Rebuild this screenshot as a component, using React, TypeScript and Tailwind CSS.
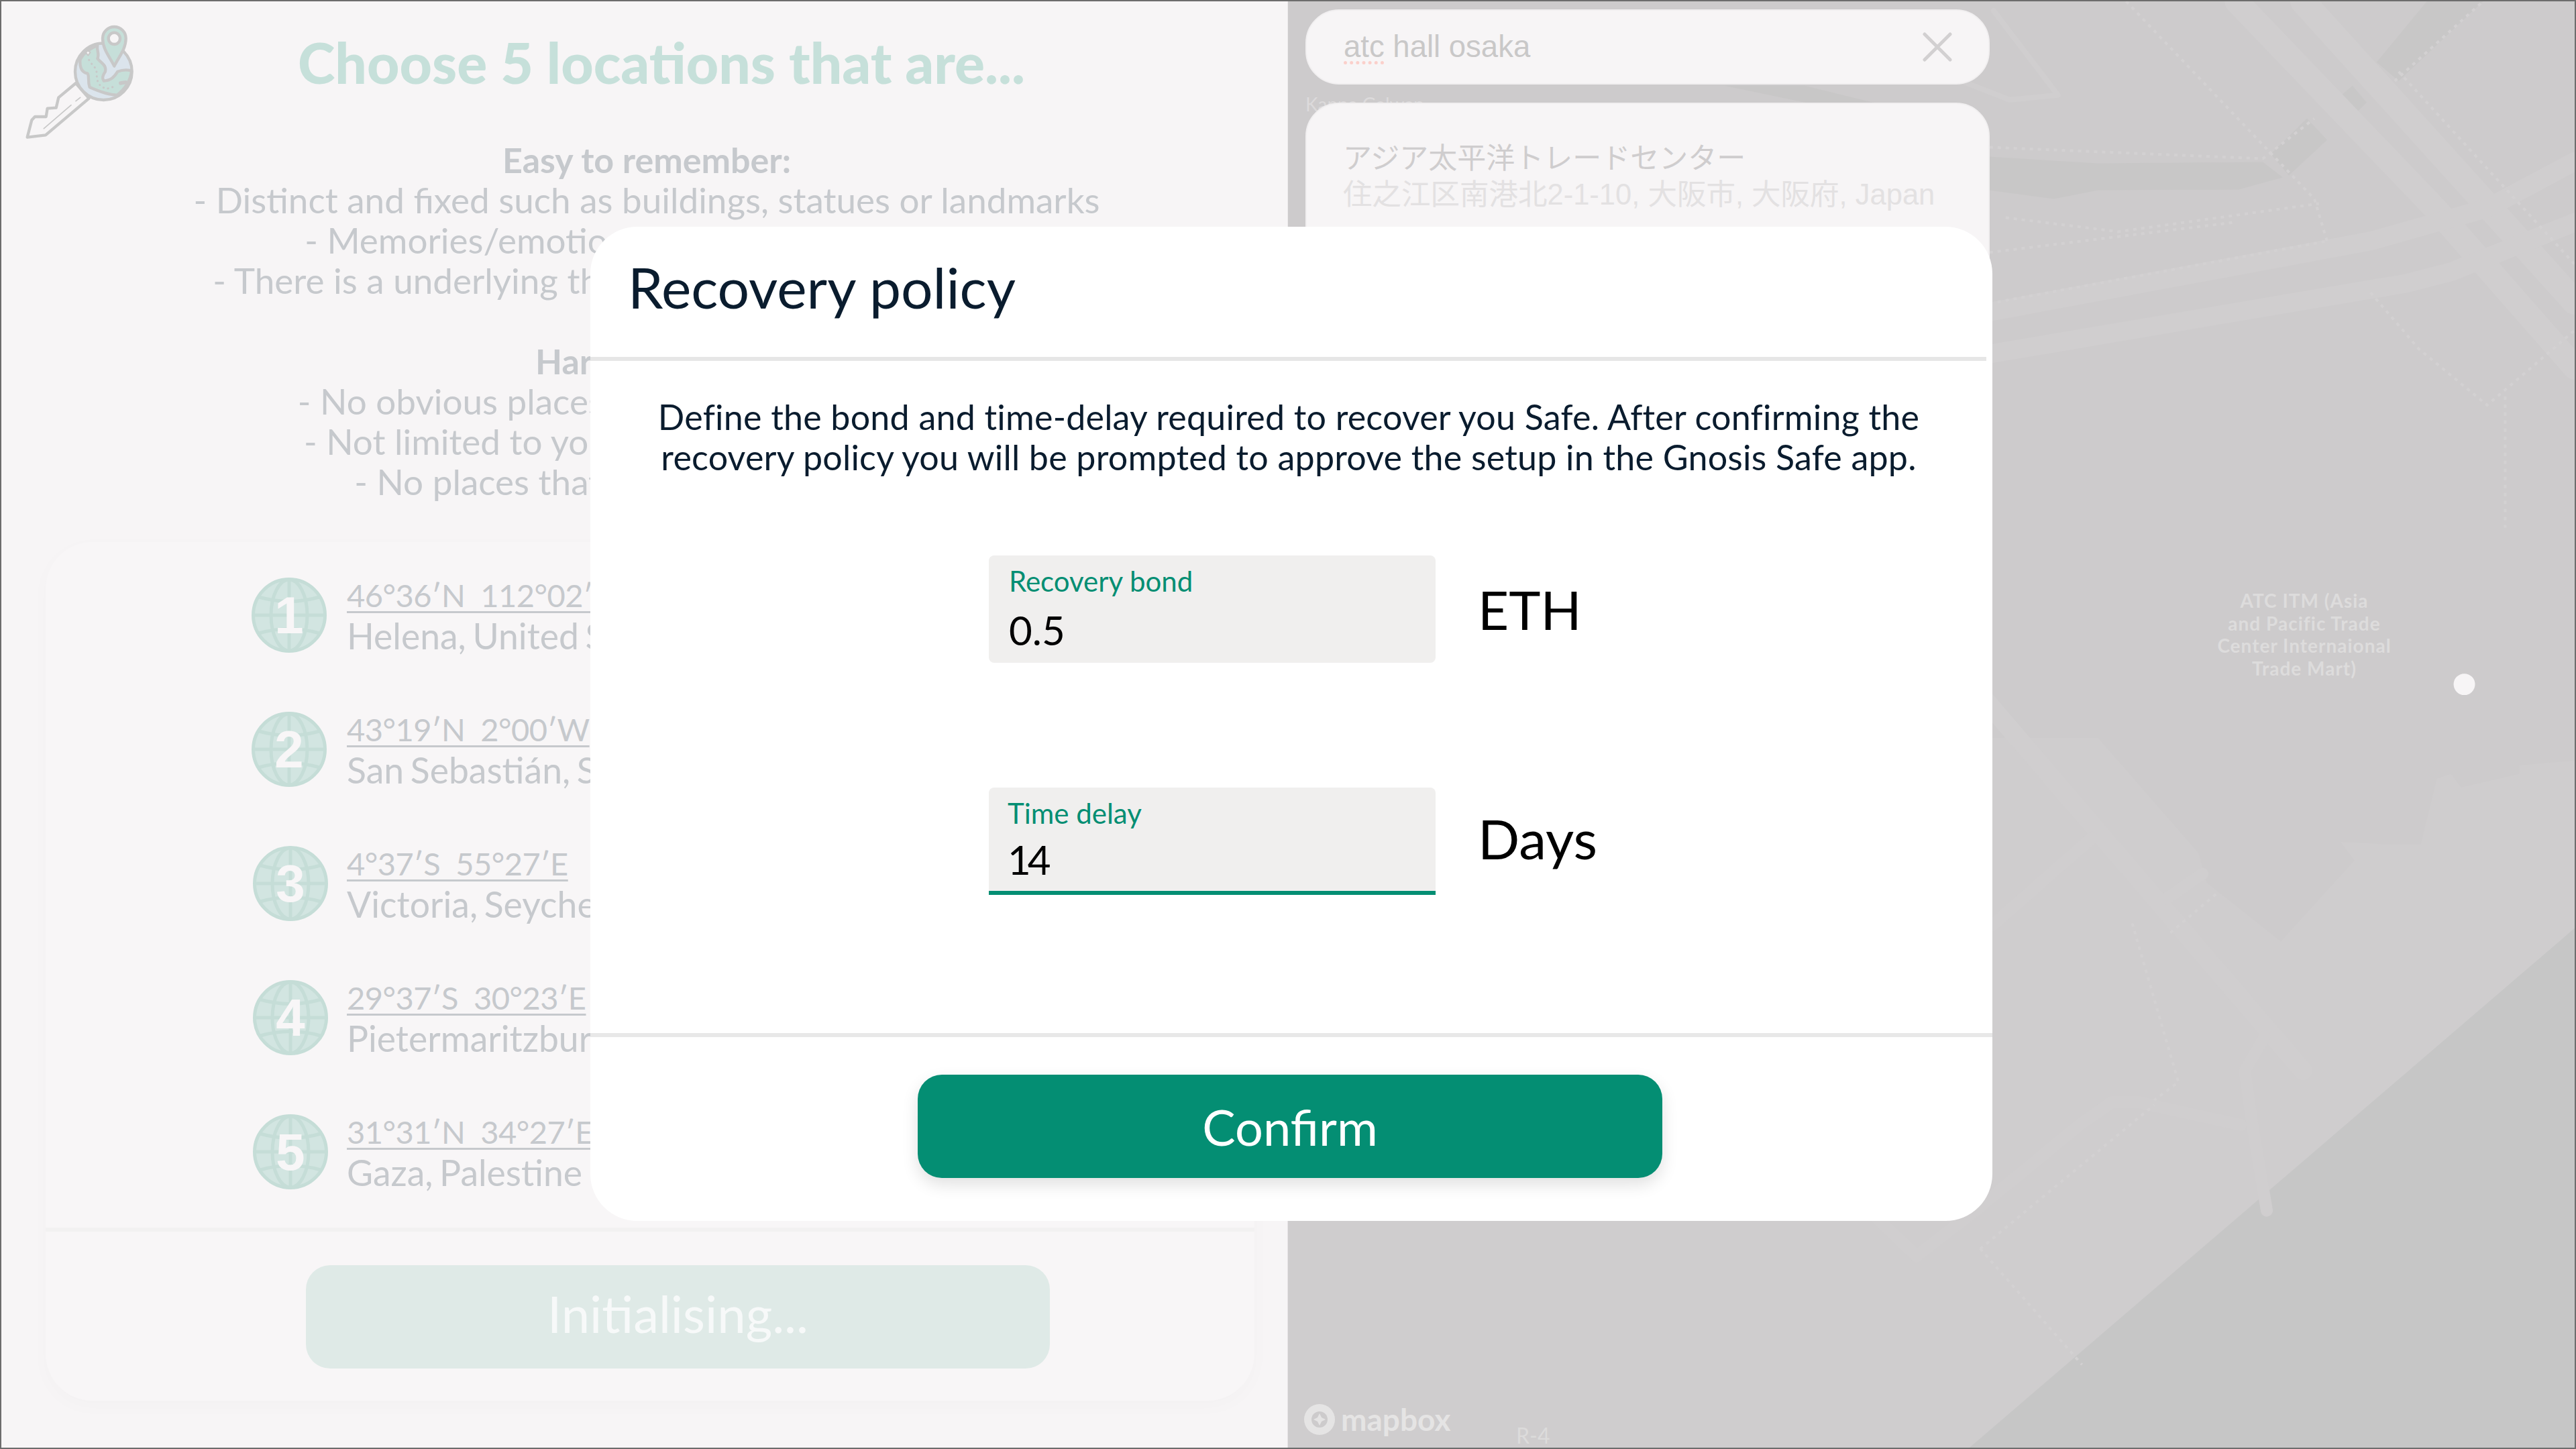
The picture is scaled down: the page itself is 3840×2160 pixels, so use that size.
import React from 'react'

const locations = [
  { n: 1, coord: '46°36′N  112°02′W', place: 'Helena, United States', shift: '' },
  { n: 2, coord: '43°19′N  2°00′W', place: 'San Sebastián, Spain', shift: '' },
  { n: 3, coord: '4°37′S  55°27′E', place: 'Victoria, Seychelles', shift: 'ml-[2px]' },
  { n: 4, coord: '29°37′S  30°23′E', place: 'Pietermaritzburg, South Africa', shift: 'ml-[2px]' },
  { n: 5, coord: '31°31′N  34°27′E', place: 'Gaza, Palestine', shift: 'ml-[2px]' },
]

function KeyLogo() {
  return (
    <svg viewBox="0 0 720 720" className="w-[240px] h-[240px] shrink-0">
      <g stroke="#c8c8c8" strokeWidth="13" strokeLinejoin="round" strokeLinecap="round">
        <path d="M333 372 L256 436 L245 482 L206 485 L200 522 L150 522 L136 537 L116 614 L198 604 L392 440 Z" fill="#f7f5f6" />
        <path d="M190 575 L312 470 M333 452 L353 436" fill="none" strokeWidth="5" />
        <circle cx="457" cy="320" r="127" fill="#dbe4ec" />
        <path d="M352 268 C362 245 385 222 430 203 C425 225 440 240 430 262 C450 285 470 290 465 320 C452 340 450 350 458 362 C490 360 505 345 520 320 C540 312 565 312 582 316 C580 360 550 400 518 425 C480 425 440 410 395 390 C385 360 395 340 385 328 C365 325 350 310 352 268 Z" fill="#c6dfd9" />
        <path d="M505 296 C485 255 453 220 453 172 A52 52 0 0 1 557 172 C557 220 525 255 505 296 Z" fill="#c6dfd9" />
        <circle cx="505" cy="172" r="26" fill="#f7f5f6" />
        <path d="M386 226 L398 234 L388 248 L378 236 Z" fill="#f7f5f6" strokeWidth="6" />
        <path d="M392 268 L405 287 L420 304 L427 325 L427 349 L433 372 L448 388 L470 397 L492 392 L513 381" fill="none" strokeWidth="9" strokeDasharray="1 20" />
        <path d="M533 372 L556 368" fill="none" strokeWidth="16" />
      </g>
    </svg>
  )
}

function GlobeIcon({ n }: { n: number }) {
  return (
    <div className="relative w-[112px] h-[112px] shrink-0">
      <svg viewBox="0 0 112 112" className="w-full h-full">
        <g fill="none" stroke="#c5ddd7" strokeWidth="5">
          <circle cx="56" cy="56" r="53.5" fill="#d2e5e1" />
          <ellipse cx="56" cy="56" rx="27" ry="53" />
          <path d="M56 3 V109 M3 56 H109" />
          <path d="M11 29 Q56 42 101 29 M11 83 Q56 70 101 83" />
        </g>
      </svg>
      <div className="absolute inset-0 flex items-center justify-center [font-family:'Liberation_Sans',sans-serif] font-bold text-[78px] leading-none text-[#f8f6f7]">
        {n}
      </div>
    </div>
  )
}

function LocationRow({ n, coord, place, shift }: { n: number; coord: string; place: string; shift: string }) {
  return (
    <div className="flex items-center h-[200px]">
      <div className={shift}>
        <GlobeIcon n={n} />
      </div>
      <div className={`flex flex-col ${shift ? 'ml-[28px]' : 'ml-[30px]'} text-[#c6c9cd] whitespace-nowrap`}>
        <span className="text-[47px] leading-[60px] tracking-[-0.5px] underline decoration-[3px] underline-offset-[6px] whitespace-pre self-start">{coord}</span>
        <span className="text-[53.5px] leading-[60px] [word-spacing:-4px]">{place}</span>
      </div>
    </div>
  )
}

function MapLayer() {
  return (
    <svg viewBox="1918 0 1920 2160" className="absolute inset-0 w-full h-full">
      <rect x="1918" y="0" width="1922" height="2160" fill="#cdcbcc" />
      <path d="M1918 1100 L3128 1100 L3278 1272 L3290 1316 L3401 1404 L3511 1283 L3490 1255 L3559 1259 L3610 1259 L3634 1161 L3655 1154 L3670 1174 L3757 1154 L3757 1141 L3840 1134 L3840 1384 L2936 2160 L1918 2160 Z" fill="#cfcdce" />
      <path d="M3840 1384 L2936 2160 L3840 2160 Z" fill="#c6c6c6" />
      <g fill="#c8c7c7">
        <path d="M2965 232 L3128 242 L3374 240 L3404 263 L3338 281 L3128 282 L3062 295 L2965 282 Z" />
        <path d="M3386 228 L3440 175 L3470 207 L3413 260 Z" />
        <path d="M3487 144 L3508 126 L3529 151 L3508 172 Z" />
        <path d="M3544 91 L3619 0 L3703 0 L3577 119 Z" />
        <path d="M2570 126 L2690 126 L2800 153 L2700 153 Z" />
      </g>
      <g fill="none" stroke="#d0cecf" strokeLinejoin="round" strokeLinecap="round">
        <path d="M3434 0 L3840 449" strokeWidth="38" />
        <path d="M3335 0 L3631 309 L3840 547" strokeWidth="36" />
        <path d="M2970 463 L3535 358 L3709 309 L3840 239" strokeWidth="28" />
        <path d="M2970 526 L3589 421 L3655 404 L3840 330" strokeWidth="28" />
        <path d="M2900 974 L3434 1597" strokeWidth="28" />
        <path d="M3377 1546 L3347 1597 L3359 1681 L3380 1806" strokeWidth="18" />
        <path d="M3341 1678 L3188 1644 L3149 1644 L3104 1675 L2952 1800 L2857 1874 L2780 1800" strokeWidth="18" />
        <path d="M3230 1340 L3284 1303" strokeWidth="18" />
        <path d="M3119 1249 L2970 1380" strokeWidth="18" />
        <path d="M2972 14 L3068 140 L2996 147 L2924 119" strokeWidth="8" />
      </g>
      <g fill="none" stroke="#d3d1d2" strokeWidth="4" strokeDasharray="5 7">
        <path d="M3170 0 L3451 295 L3470 358" />
        <path d="M2966 218 L3374 235 L3451 175" />
        <path d="M3571 119 L3703 0" />
        <path d="M3577 105 L3840 393" />
        <path d="M2990 323 L3158 344 L3458 302" />
        <path d="M2966 375 L3332 330" />
        <path d="M2978 449 L3470 358" />
        <path d="M3535 435 L3607 519 L3709 603 L3775 547 L3840 491" />
        <path d="M3736 590 L3736 786" />
        <path d="M2952 1863 L3212 1648" />
        <path d="M2952 1863 L3104 2036" />
        <path d="M3179 1377 L3248 1614 L3212 1641" />
        <path d="M3236 1391 L3308 1330" />
      </g>
      <circle cx="3675" cy="1020" r="16" fill="#f7f5f6" />
    </svg>
  )
}

export default function App() {
  return (
    <div className="relative flex w-[3840px] h-[2160px] overflow-hidden border-2 border-[#6d6d6d] bg-[#f7f5f6] [font-family:Lato,sans-serif]">
      {/* Left panel */}
      <div className="flex flex-col w-[1916px] shrink-0">
        <div className="flex h-[206px] items-start">
          <div className="h-[206px] -mt-[2px]">
            <KeyLogo />
          </div>
          <h1 className="flex-1 pr-[188px] pt-[43px] text-center text-[84px] leading-[96px] font-black text-[#c6e0da] whitespace-nowrap">
            Choose 5 locations that are...
          </h1>
        </div>

        <div className="flex flex-col items-center pl-[8px] text-[53px] leading-[60px] text-[#c6c9cd] whitespace-nowrap">
          <p className="font-bold text-[52px]">Easy to remember:</p>
          <p>- Distinct and fixed such as buildings, statues or landmarks</p>
          <p className="pr-[29px]">- Memories/emotional connection to place</p>
          <p className="pl-[20px]">- There is a underlying theme that links them all together</p>
          <p className="h-[60px]"></p>
          <p className="font-bold text-[52px]">Hard to guess:</p>
          <p className="pr-[39px]">- No obvious places like your home or work</p>
          <p className="pl-[54px]">- Not limited to your local area or your country</p>
          <p className="pr-[44px]">- No places that you shared publicly</p>
        </div>

        <div className="flex flex-col ml-[66px] mt-[60px] w-[1802px] h-[1280px] rounded-[70px] bg-[#f8f6f7] shadow-[0_8px_30px_rgba(0,0,0,0.02)]">
          <div className="flex flex-col pt-[9px] pl-[307px] h-[1022px]">
            {locations.map((l) => (
              <LocationRow key={l.n} {...l} />
            ))}
          </div>
          <div className="h-[6px] bg-[#f2f1f1]"></div>
          <div className="flex-1 pt-[50px] pl-[388px]">
            <div className="flex items-center justify-center w-[1109px] h-[154px] pb-[10px] rounded-[36px] bg-[#dfeae7] text-[76px] text-[#f7f9f9]">
              Initialising...
            </div>
          </div>
        </div>
      </div>

      {/* Map */}
      <div className="relative flex-1">
        <MapLayer />
        <div className="absolute top-[877px] left-[1367px] w-[300px] text-center text-[28px] leading-[33.5px] font-bold tracking-[1px] text-[#dddcdc] whitespace-nowrap">
          ATC ITM (Asia<br />and Pacific Trade<br />Center Internaional<br />Trade Mart)
        </div>
        <div className="absolute left-[28px] top-[138px] text-[28px] leading-[30px] text-[#dcdadb] whitespace-nowrap">Kanna Galwan</div>

        <div className="absolute left-[28px] top-[12px] flex flex-col gap-[27px] w-[1020px]">
          <div className="flex items-center justify-between h-[112px] pl-[55px] pr-[54px] rounded-[50px] border-2 border-[#f1eff0] bg-[#f7f5f6] [font-family:'Liberation_Sans',sans-serif] text-[45.5px] text-[#c9c8c8]">
            <span>
              <span className="underline decoration-dotted decoration-[5px] decoration-[#fbd0cb] underline-offset-[6px]">atc</span> hall osaka
            </span>
            <svg viewBox="0 0 44 44" className="w-[44px] h-[44px]">
              <path d="M3 3 L41 41 M41 3 L3 41" stroke="#d2d0d1" strokeWidth="5" strokeLinecap="round" />
            </svg>
          </div>
          <div className="flex flex-col h-[400px] pt-[54px] pl-[54px] rounded-[50px] border-2 border-[#f1eff0] bg-[#f7f5f6] [font-family:'Liberation_Sans','Noto_Sans_CJK_JP',sans-serif] leading-[54px]">
            <span className="text-[43px] text-[#cfcdce]">アジア太平洋トレードセンター</span>
            <span className="text-[43.5px] text-[#e3e1e2]">住之江区南港北2-1-10, 大阪市, 大阪府, Japan</span>
          </div>
        </div>

        <div className="absolute left-[25px] bottom-[18px] flex items-center gap-[8px] text-[#e5e4e4]">
          <svg viewBox="0 0 48 48" className="w-[48px] h-[48px]">
            <circle cx="24" cy="24" r="23" fill="#e5e4e4" />
            <circle cx="24" cy="24" r="12" fill="#cdcbcc" />
            <path d="M24 15 L27 21 L33 24 L27 27 L24 33 L21 27 L15 24 L21 21 Z" fill="#e5e4e4" />
          </svg>
          <span className="text-[46px] leading-none font-bold">mapbox</span>
        </div>
        <div className="absolute left-[342px] bottom-0 text-[32px] leading-[36px] text-[#dcdbdb]">R-4</div>
      </div>

      {/* Modal */}
      <div className="absolute left-[878px] top-[336px] flex flex-col w-[2090px] h-[1482px] rounded-[70px] bg-white text-[#0a1c2e]">
        <div className="flex items-center h-[194px] pl-[56px] pb-[14px] text-[84px] leading-none">Recovery policy</div>
        <div className="h-[6px] mr-[9px] bg-[#e6e6e6]"></div>
        <div className="flex flex-col flex-1">
          <p className="pt-[53px] text-center pr-[8px] text-[52px] leading-[60px] tracking-[0.2px]">
            Define the bond and time-delay required to recover you Safe. After confirming the<br />
            recovery policy you will be prompted to approve the setup in the Gnosis Safe app.
          </p>
          <div className="flex items-center mt-[117px] ml-[594px] gap-[63px]">
            <div className="flex flex-col w-[666px] h-[160px] pl-[30px] pt-[14px] rounded-[8px] bg-[#f0efee]">
              <span className="text-[42px] leading-[48px] text-[#048e73]">Recovery bond</span>
              <span className="mt-[14px] text-[60px] leading-[70px] text-black">0.5</span>
            </div>
            <span className="text-[80px] leading-none text-black">ETH</span>
          </div>
          <div className="flex items-center mt-[186px] ml-[594px] gap-[63px]">
            <div className="flex flex-col w-[666px] h-[160px] pl-[28px] pt-[14px] rounded-t-[8px] border-b-[6px] border-[#048e73] bg-[#f0efee]">
              <span className="text-[42px] leading-[48px] text-[#048e73]">Time delay</span>
              <span className="mt-[10px] text-[60px] leading-[70px] tracking-[-5px] text-black">14</span>
            </div>
            <span className="pb-[10px] text-[82px] leading-none text-black">Days</span>
          </div>
        </div>
        <div className="h-[6px] bg-[#e8e8e8]"></div>
        <div className="h-[274px] pt-[56px] pl-[488px]">
          <div className="flex items-center justify-center w-[1110px] h-[154px] rounded-[36px] bg-[#048e73] text-[74px] text-white shadow-[0_10px_24px_rgba(0,0,0,0.12)]">
            Confirm
          </div>
        </div>
      </div>
    </div>
  )
}
